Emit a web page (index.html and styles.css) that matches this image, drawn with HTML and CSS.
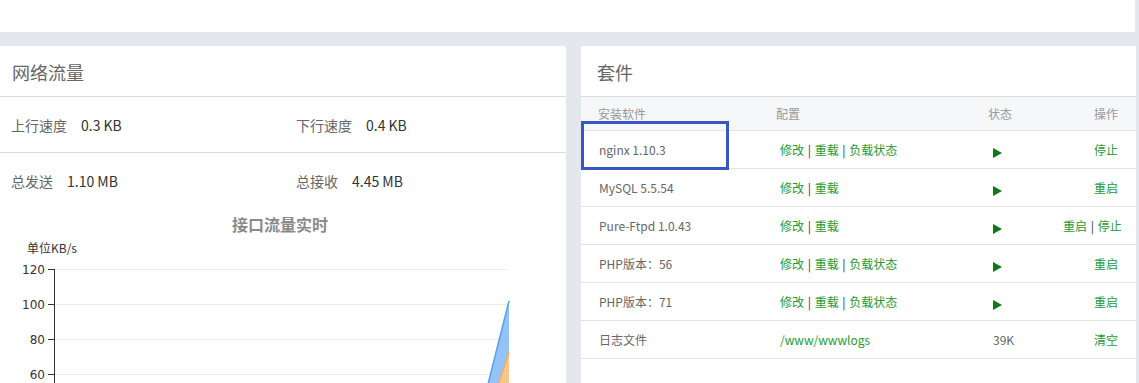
FILE: index.html
```html
<!DOCTYPE html>
<html lang="zh-CN">
<head>
    <meta charset="UTF-8">
    <title>面板首页</title>
    <link rel="stylesheet" href="styles.css">
</head>
<body>
    <div class="topbar"></div>

    <div class="main">
        <!-- 网络流量 -->
        <div class="panel panel-net">
            <div class="panel-title">网络流量</div>
            <div class="stat-row">
                <div class="stat"><span class="stat-label">上行速度</span><span class="stat-value">0.3 KB</span></div>
                <div class="stat"><span class="stat-label">下行速度</span><span class="stat-value">0.4 KB</span></div>
            </div>
            <div class="stat-row stat-row-last">
                <div class="stat"><span class="stat-label">总发送</span><span class="stat-value">1.10 MB</span></div>
                <div class="stat"><span class="stat-label">总接收</span><span class="stat-value">4.45 MB</span></div>
            </div>
            <div class="chart">
                <div class="chart-title">接口流量实时</div>
                <div class="chart-unit">单位KB/s</div>
                <svg class="chart-svg" width="566" height="130" viewBox="0 0 566 130">
                    <g stroke="#ececec" stroke-width="1">
                        <line x1="54" y1="11.5" x2="508" y2="11.5"/>
                        <line x1="54" y1="46.5" x2="508" y2="46.5"/>
                        <line x1="54" y1="81.5" x2="508" y2="81.5"/>
                        <line x1="54" y1="116.5" x2="508" y2="116.5"/>
                    </g>
                    <polygon points="487,130 509,43 509,130" fill="#94c4f7"/>
                    <line x1="487" y1="130" x2="509" y2="43" stroke="#5a9fef" stroke-width="1.5"/>
                    <polygon points="497,130 509,94 509,130" fill="#f8c68c"/>
                    <line x1="497" y1="130" x2="509" y2="94" stroke="#f5a84e" stroke-width="1.2"/>
                    <g stroke="#333" stroke-width="1">
                        <line x1="54.5" y1="11" x2="54.5" y2="130"/>
                        <line x1="48" y1="11.5" x2="54" y2="11.5"/>
                        <line x1="48" y1="46.5" x2="54" y2="46.5"/>
                        <line x1="48" y1="81.5" x2="54" y2="81.5"/>
                        <line x1="48" y1="116.5" x2="54" y2="116.5"/>
                    </g>
                    <g class="axis-text" text-anchor="end">
                        <text x="45" y="16">120</text>
                        <text x="45" y="51">100</text>
                        <text x="45" y="86">80</text>
                        <text x="45" y="121">60</text>
                    </g>
                </svg>
            </div>
        </div>

        <!-- 套件 -->
        <div class="panel panel-soft">
            <div class="panel-title">套件</div>
            <table class="soft-table">
                <thead>
                    <tr>
                        <th class="col-name">安装软件</th>
                        <th class="col-conf">配置</th>
                        <th class="col-state">状态</th>
                        <th class="col-op">操作</th>
                    </tr>
                </thead>
                <tbody>
                    <tr>
                        <td class="col-name">nginx 1.10.3</td>
                        <td class="col-conf"><a>修改</a> | <a>重载</a> | <a>负载状态</a></td>
                        <td class="col-state"><span class="play"></span></td>
                        <td class="col-op"><a>停止</a></td>
                    </tr>
                    <tr>
                        <td class="col-name">MySQL 5.5.54</td>
                        <td class="col-conf"><a>修改</a> | <a>重载</a></td>
                        <td class="col-state"><span class="play"></span></td>
                        <td class="col-op"><a>重启</a></td>
                    </tr>
                    <tr>
                        <td class="col-name">Pure-Ftpd 1.0.43</td>
                        <td class="col-conf"><a>修改</a> | <a>重载</a></td>
                        <td class="col-state"><span class="play"></span></td>
                        <td class="col-op"><a>重启</a> | <a>停止</a></td>
                    </tr>
                    <tr>
                        <td class="col-name">PHP版本：56</td>
                        <td class="col-conf"><a>修改</a> | <a>重载</a> | <a>负载状态</a></td>
                        <td class="col-state"><span class="play"></span></td>
                        <td class="col-op"><a>重启</a></td>
                    </tr>
                    <tr>
                        <td class="col-name">PHP版本：71</td>
                        <td class="col-conf"><a>修改</a> | <a>重载</a> | <a>负载状态</a></td>
                        <td class="col-state"><span class="play"></span></td>
                        <td class="col-op"><a>重启</a></td>
                    </tr>
                    <tr>
                        <td class="col-name">日志文件</td>
                        <td class="col-conf"><a>/www/wwwlogs</a></td>
                        <td class="col-state">39K</td>
                        <td class="col-op"><a>清空</a></td>
                    </tr>
                </tbody>
            </table>
            <!-- 标注框 -->
            <div class="mark-box"></div>
        </div>
    </div>
</body>
</html>
```

FILE: styles.css
```css
body {
    margin: 0;
    background-color: #e4e8ec;
    font-family: "Noto Sans CJK SC", "Liberation Sans", sans-serif;
    color: #555;
    overflow: hidden;
}

.topbar {
    height: 32px;
    width: 1135px;
    background: #fff;
}

.main {
    display: flex;
    gap: 15px;
    padding-top: 14px;
}

.panel {
    background: #fff;
    height: 400px;
    position: relative;
    flex-shrink: 0;
}

.panel-net {
    width: 566px;
}

.panel-soft {
    width: 555px;
}

.panel-title {
    height: 50px;
    line-height: 52px;
    font-size: 18px;
    color: #666;
    padding-left: 12px;
    border-bottom: 1px solid #ddd;
}

.panel-soft .panel-title {
    padding-left: 16px;
}

.stat-row {
    display: flex;
    height: 55px;
    align-items: center;
    border-bottom: 1px solid #ddd;
    padding-left: 11px;
    font-size: 14px;
}

.stat-row-last {
    border-bottom: none;
}

.stat {
    width: 285px;
    flex-shrink: 0;
}

.stat-label {
    color: #666;
    margin-right: 14px;
}

.stat-value {
    color: #333;
}

.chart {
    padding-top: 4px;
}

.chart-title {
    text-align: center;
    font-size: 16px;
    font-weight: bold;
    color: #8a8a8a;
    line-height: 24px;
    padding-right: 6px;
}

.chart-unit {
    font-size: 12px;
    color: #333;
    padding-left: 27px;
    line-height: 18px;
    margin-top: 3px;
}

.chart-svg {
    display: block;
    margin-top: 1px;
}

.axis-text {
    font-family: "DejaVu Sans", sans-serif;
    font-size: 12px;
    fill: #333;
}

.soft-table {
    width: 100%;
    border-collapse: collapse;
    table-layout: fixed;
    font-size: 12px;
}

.soft-table th,
.soft-table td {
    box-sizing: border-box;
    padding: 0;
}

.soft-table th {
    background: #f6f7f9;
    color: #999;
    font-weight: normal;
    height: 33px;
    text-align: left;
    border-bottom: 1px solid #e4e4e4;
}

.soft-table td {
    height: 38px;
    border-bottom: 1px solid #e4e4e4;
    color: #666;
    white-space: nowrap;
}

.soft-table a {
    color: #1f9a36;
}

th.col-name {
    width: 195px;
    padding-left: 17px;
}

td.col-name {
    padding-left: 18px;
}

th.col-conf {
    width: 207px;
}

td.col-conf {
    padding-left: 4px;
    color: #333;
    word-spacing: 1px;
}

th.col-state {
    width: 80px;
    padding-left: 5px;
}

td.col-state {
    padding-left: 10px;
}

th.col-op,
td.col-op {
    text-align: right;
    padding-right: 18px;
}

td.col-op {
    color: #333;
    word-spacing: 1px;
}

.play {
    display: inline-block;
    width: 0;
    height: 0;
    border-top: 5px solid transparent;
    border-bottom: 5px solid transparent;
    border-left: 9px solid #0e7a14;
    vertical-align: -3px;
}

.mark-box {
    position: absolute;
    left: 0;
    top: 75px;
    width: 142px;
    height: 43px;
    border: 3px solid #3a56c6;
}
```
